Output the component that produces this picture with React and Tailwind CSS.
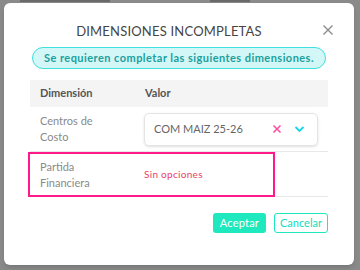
import React from "react";

const App = () => {
  return (
    <div
      className="relative w-[360px] h-[270px] overflow-hidden bg-[#8a8a8a]"
      style={{ fontFamily: "Lato, 'Open Sans', sans-serif" }}
    >
      {/* page behind the overlay, only a sliver shows */}
      <div className="absolute top-0 left-[20px] flex gap-[60px]">
        <div className="w-[90px] h-[2px] bg-[#6a6a6a]"></div>
        <div className="ml-[40px] w-[40px] h-[2px] bg-[#6a6a6a]"></div>
      </div>

      <div className="relative mt-[3px] ml-[4px] w-[350px] h-[262px] bg-white rounded-[6px] shadow-md">
        {/* header */}
        <div className="relative flex items-center justify-center pt-[19px] pr-[20px] h-[38px]">
          <h2 className="text-[13px] tracking-[0.2px] text-[#454545]">
            DIMENSIONES INCOMPLETAS
          </h2>
          <button className="absolute right-[20px] top-[21px] text-[#888]">
            <svg width="12" height="12" viewBox="0 0 12 12" fill="none" stroke="currentColor" strokeWidth="1.3">
              <path d="M1.5 1.5l9 9M10.5 1.5l-9 9" />
            </svg>
          </button>
        </div>

        <div className="px-[26px]">
          {/* banner */}
          <div className="mt-[6px] mx-[2px] h-[22px] flex items-center justify-center rounded-full border border-[#3ee0e0] bg-[#d2f7f6]">
            <span className="text-[11px] font-bold tracking-[0.45px] text-[#1b9f9f]">
              Se requieren completar las siguientes dimensiones.
            </span>
          </div>

          {/* table */}
          <div className="mt-[11px]">
            <div className="flex items-center h-[27px] bg-[#f4f4f4] text-[11px] font-bold text-[#555]">
              <div className="w-[115px] pl-[10px]">Dimensión</div>
              <div>Valor</div>
            </div>

            <div className="flex items-center h-[45px] border-b border-[#e8e8e8]">
              <div className="w-[114px] pl-[10px] text-[11px] leading-[16px] text-[#8a8a8a]">
                Centros de
                <br />
                Costo
              </div>
              <div className="flex items-center w-[174px] h-[33px] px-[9px] rounded-[5px] border border-[#e4e4e4] shadow-sm">
                <span className="flex-1 text-[11px] text-[#666]">COM MAIZ 25-26</span>
                <svg className="mr-[12px]" width="10" height="10" viewBox="0 0 10 10" fill="none" stroke="#ff4fa0" strokeWidth="1.6">
                  <path d="M1.5 1.5l7 7M8.5 1.5l-7 7" />
                </svg>
                <svg className="mr-[3px]" width="11" height="8" viewBox="0 0 11 8" fill="none" stroke="#18d5e8" strokeWidth="1.8">
                  <path d="M1.5 2l4 4 4-4" />
                </svg>
              </div>
            </div>

            <div className="flex items-center">
              <div className="flex items-center w-[247px] h-[45px] -ml-[2px] border-2 border-[#ff1a8c]">
                <div className="w-[114px] pl-[10px] text-[11px] leading-[16px] text-[#8a8a8a]">
                  Partida
                  <br />
                  Financiera
                </div>
                <span className="text-[10px] tracking-[0.3px] text-[#e8406a]">Sin opciones</span>
              </div>
              <div className="flex-1 self-end border-b border-[#e8e8e8]"></div>
            </div>
          </div>

          {/* actions */}
          <div className="flex justify-end gap-[8px] mt-[16px]">
            <button className="h-[20px] px-[7px] rounded-[3px] bg-[#1ee8bd] text-[11px] tracking-[0.2px] text-white">
              Aceptar
            </button>
            <button className="h-[20px] px-[5px] rounded-[3px] border border-[#1ee8bd] text-[11px] text-[#14dcc0]">
              Cancelar
            </button>
          </div>
        </div>
      </div>
    </div>
  );
};

export default App;
